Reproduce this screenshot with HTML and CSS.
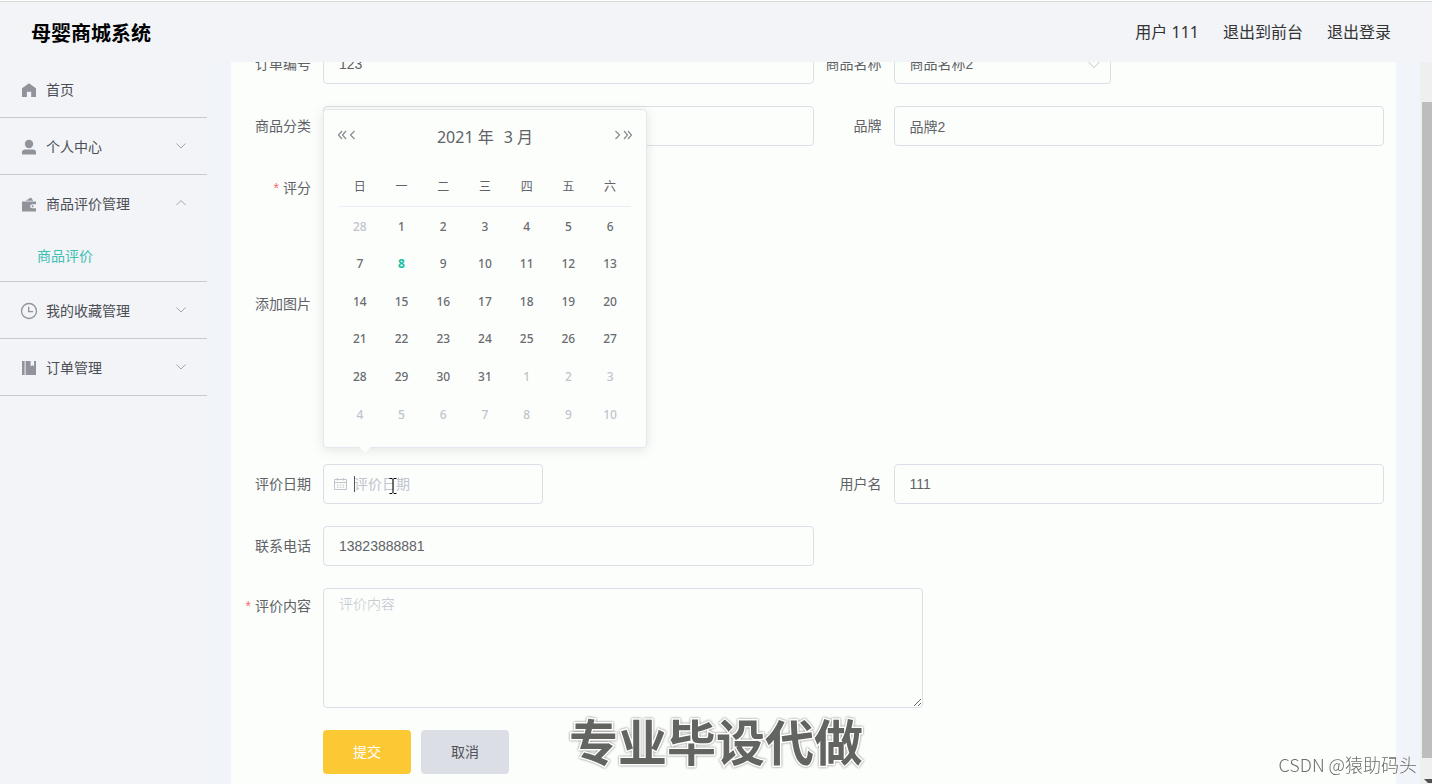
FILE: index.html
```html
<!DOCTYPE html>
<html lang="zh-CN">
<head>
<meta charset="utf-8">
<title>母婴商城系统</title>
<link rel="stylesheet" href="styles.css">
</head>
<body>
<div class="app">
  <header class="header">
    <h1 class="brand">母婴商城系统</h1>
    <nav class="user-nav">
      <span>用户 111</span>
      <a href="#">退出到前台</a>
      <a href="#">退出登录</a>
    </nav>
  </header>
  <div class="body">
    <nav class="sidebar">
      <div class="group">
        <a class="item first" href="#">
          <svg class="icon" viewBox="0 0 18 18"><path d="M9 2.2 L15.6 7 Q16 7.4 16 8 V16 H11.2 V10.7 H6.9 V16 H2 V8 Q2 7.4 2.4 7Z"/></svg>
          <span>首页</span>
        </a>
      </div>
      <div class="group">
        <a class="item" href="#">
          <svg class="icon" viewBox="0 0 18 18"><circle cx="9" cy="6" r="4.2"/><path d="M2 16.5 V14.6 Q2 11.4 5.2 11.4 H12.8 Q16 11.4 16 14.6 V16.5Z"/></svg>
          <span>个人中心</span>
          <svg class="arrow" viewBox="0 0 12 12"><path d="M1.5 2.5 L6 7 L10.5 2.5"/></svg>
        </a>
      </div>
      <div class="group">
        <a class="item" href="#">
          <svg class="icon" viewBox="0 0 18 18"><path d="M2 6.6 H16 V9.3 H12.4 Q10.1 9.3 10.1 11.3 Q10.1 13.3 12.4 13.3 H16 V16.4 H2Z"/><path d="M5.5 5.8 L11 2.6 L13.2 5.8Z"/><circle cx="12.6" cy="11.3" r="1"/></svg>
          <span>商品评价管理</span>
          <svg class="arrow" viewBox="0 0 12 12"><path d="M1.5 7 L6 2.5 L10.5 7"/></svg>
        </a>
        <a class="subitem" href="#">商品评价</a>
      </div>
      <div class="group">
        <a class="item" href="#">
          <svg class="icon line" viewBox="0 0 18 18"><circle cx="9" cy="9" r="7.5"/><path d="M8.7 4.8 V9.6 H13"/></svg>
          <span>我的收藏管理</span>
          <svg class="arrow" viewBox="0 0 12 12"><path d="M1.5 2.5 L6 7 L10.5 2.5"/></svg>
        </a>
      </div>
      <div class="group">
        <a class="item" href="#">
          <svg class="icon" viewBox="0 0 18 18"><path d="M2 2 H4.6 V16 H2Z M5.6 2 H10.6 V7.4 L12.3 6 L14 7.4 V2 H16 V16 H5.6Z"/></svg>
          <span>订单管理</span>
          <svg class="arrow" viewBox="0 0 12 12"><path d="M1.5 2.5 L6 7 L10.5 2.5"/></svg>
        </a>
      </div>
    </nav>
    <main class="main">
      <form class="form">
        <div class="row">
          <div class="field"><label for="order">订单编号</label><input class="control" id="order" value="123"></div>
          <div class="field"><label for="goods">商品名称</label>
            <div class="select-box">
              <select class="control" id="goods"><option>商品名称2</option></select>
              <svg class="select-arrow" viewBox="0 0 14 14"><path d="M1.5 4 L7 9.5 L12.5 4"/></svg>
            </div>
          </div>
        </div>
        <div class="row">
          <div class="field"><label for="category">商品分类</label><input class="control" id="category"></div>
          <div class="field"><label for="make">品牌</label><input class="control" id="make" value="品牌2"></div>
        </div>
        <div class="row rating"><div class="field"><span class="label required">评分</span></div></div>
        <div class="row upload"><div class="field"><span class="label">添加图片</span></div></div>
        <div class="row">
          <div class="field"><label for="date">评价日期</label>
            <div class="date-box">
              <input class="control date-input" id="date" placeholder="评价日期">
              <svg class="calendar-icon" viewBox="0 0 14 14"><path d="M1.5 2.5 H13.5 V12.5 H1.5Z M1.5 5.5 H13.5 M4.5 1 V3.5 M10.5 1 V3.5 M4 8 H5.5 M6.8 8 H8.3 M9.6 8 H11.1 M4 10.2 H5.5 M6.8 10.2 H8.3 M9.6 10.2 H11.1"/></svg>
              <span class="caret"></span>
              <svg class="ibeam" viewBox="0 0 8 16"><path d="M0.5 0.5 H3 L4 1.5 L5 0.5 H7.5 M4 1.5 V14.5 M0.5 15.5 H3 L4 14.5 L5 15.5 H7.5"/></svg>
              <div class="picker">
                <div class="picker-head">
                  <button type="button" aria-label="上一年"><svg viewBox="0 0 10 10"><path d="M5 1 L1.5 5 L5 9 M9 1 L5.5 5 L9 9"/></svg></button>
                  <button type="button" aria-label="上个月"><svg viewBox="0 0 10 10"><path d="M7.5 1 L3.5 5 L7.5 9"/></svg></button>
                  <div class="picker-title"><span>2021 年</span><span>3 月</span></div>
                  <button type="button" aria-label="下个月"><svg viewBox="0 0 10 10"><path d="M2.5 1 L6.5 5 L2.5 9"/></svg></button>
                  <button type="button" aria-label="下一年"><svg viewBox="0 0 10 10"><path d="M1 1 L4.5 5 L1 9 M5 1 L8.5 5 L5 9"/></svg></button>
                </div>
                <table class="days">
                  <thead><tr><th>日</th><th>一</th><th>二</th><th>三</th><th>四</th><th>五</th><th>六</th></tr></thead>
                  <tbody>
                    <tr><td class="out">28</td><td>1</td><td>2</td><td>3</td><td>4</td><td>5</td><td>6</td></tr>
                    <tr><td>7</td><td class="today">8</td><td>9</td><td>10</td><td>11</td><td>12</td><td>13</td></tr>
                    <tr><td>14</td><td>15</td><td>16</td><td>17</td><td>18</td><td>19</td><td>20</td></tr>
                    <tr><td>21</td><td>22</td><td>23</td><td>24</td><td>25</td><td>26</td><td>27</td></tr>
                    <tr><td>28</td><td>29</td><td>30</td><td>31</td><td class="out">1</td><td class="out">2</td><td class="out">3</td></tr>
                    <tr><td class="out">4</td><td class="out">5</td><td class="out">6</td><td class="out">7</td><td class="out">8</td><td class="out">9</td><td class="out">10</td></tr>
                  </tbody>
                </table>
              </div>
            </div>
          </div>
          <div class="field"><label for="user">用户名</label><input class="control" id="user" value="111"></div>
        </div>
        <div class="row">
          <div class="field"><label for="phone">联系电话</label><input class="control" id="phone" value="13823888881"></div>
          <div class="field"></div>
        </div>
        <div class="row">
          <div class="field"><label class="required" for="content">评价内容</label><textarea class="control" id="content" placeholder="评价内容"></textarea></div>
        </div>
        <div class="actions">
          <button class="btn submit" type="button">提交</button>
          <button class="btn cancel" type="button">取消</button>
        </div>
      </form>
    </main>
    <div class="scrollbar"><div class="thumb"></div><div class="scroll-down"></div></div>
  </div>
</div>
<div class="caption">专业毕设代做</div>
<div class="credit">CSDN @猿助码头</div>
</body>
</html>
```
FILE: styles.css
```css
* { box-sizing: border-box; }

body {
  margin: 0;
  font: 14px/20px "Noto Sans", "Noto Sans CJK SC", sans-serif;
  color: #606266;
  background: #f1f5f9;
}

a { color: inherit; text-decoration: none; }

.app {
  display: flex;
  flex-direction: column;
  height: 100vh;
  overflow: hidden;
  border-top: 1px solid #fcfefc;
}

.header {
  flex: none;
  display: flex;
  align-items: center;
  justify-content: space-between;
  height: 61px;
  padding: 0 41px 0 31px;
  background: #f2f4f8;
  border-top: 1px solid #d6dad8;
}

.brand {
  margin: 0;
  padding-top: 3px;
  font-size: 20px;
  line-height: 28px;
  color: #000;
}

.user-nav {
  display: flex;
  gap: 24px;
  font-size: 16px;
  line-height: 24px;
  color: #333;
}

.body { flex: 1; display: flex; min-height: 0; }

.sidebar {
  flex: none;
  width: 207px;
  background: #f2f4f8;
  color: #4c4e54;
}

.group { border-bottom: 1px solid #c8c9c9; }

.item {
  display: flex;
  align-items: center;
  gap: 8px;
  height: 56px;
  padding: 1px 20px 0;
}

.item.first { height: 55px; }

.icon { width: 18px; height: 18px; fill: #909399; }
.icon.line { fill: none; stroke: #909399; stroke-width: 1.3; }

.arrow {
  width: 12px;
  height: 12px;
  margin-left: auto;
  fill: none;
  stroke: #a4a6aa;
}

.subitem {
  display: block;
  padding-left: 37px;
  line-height: 50px;
  color: #40c0b0;
}

.main {
  flex: 1;
  min-width: 0;
  padding: 0 24px;
  overflow: hidden;
}

.form {
  display: flex;
  flex-direction: column;
  gap: 22px;
  min-height: 100%;
  margin-top: -18px;
  padding: 0 12px 22px;
  background: #fcfefc;
}

.row { display: flex; }
.rating { min-height: 94px; }
.upload { min-height: 158px; }

.field { flex: 1; display: flex; min-width: 0; }

label, .label {
  flex: none;
  width: 80px;
  padding-right: 12px;
  line-height: 40px;
  text-align: right;
  white-space: nowrap;
}

.field:has(textarea) label { line-height: 36px; }

.required::before {
  content: "*";
  margin-right: 4px;
  font-family: "Liberation Sans", sans-serif;
  color: #f56c6c;
}

.control {
  flex: 1;
  min-width: 0;
  height: 40px;
  padding: 0 15px;
  font: 14px/20px "Liberation Sans", "Noto Sans CJK SC", sans-serif;
  color: #606266;
  background: #fcfefc;
  border: 1px solid #dcdfe6;
  border-radius: 4px;
  outline: none;
}

.control::placeholder { color: #c0c4cc; opacity: 1; }

textarea.control {
  flex: none;
  width: 600px;
  max-width: 100%;
  height: 120px;
  padding: 5px 15px;
  resize: both;
}

textarea.control::placeholder { font-weight: 300; }

.select-box { position: relative; display: flex; width: 217px; }
.select-box .control { appearance: none; }

.select-arrow {
  position: absolute;
  right: 10px;
  top: 14px;
  width: 14px;
  height: 14px;
  fill: none;
  stroke: #c0c4cc;
  pointer-events: none;
}

.date-box { position: relative; display: flex; width: 220px; }
.date-box .date-input { padding-left: 30px; }

.calendar-icon {
  position: absolute;
  left: 10px;
  top: 13px;
  width: 14px;
  height: 14px;
  fill: none;
  stroke: #c0c4cc;
}

.caret {
  position: absolute;
  left: 31px;
  top: 12px;
  width: 1px;
  height: 16px;
  background: #505256;
}

.ibeam {
  position: absolute;
  left: 66px;
  top: 14px;
  width: 8px;
  height: 16px;
  fill: none;
  stroke: #000;
}

.picker {
  position: absolute;
  left: 0;
  bottom: calc(100% + 16px);
  width: 324px;
  padding: 12px 13px 15px;
  background: #fcfefc;
  border: 1px solid #e4e7ed;
  border-radius: 4px;
  box-shadow: 0 2px 12px rgba(0, 0, 0, 0.1);
}

.picker::after {
  content: "";
  position: absolute;
  left: 35px;
  top: 100%;
  border: 6px solid transparent;
  border-top-color: #fcfefc;
  border-bottom-width: 0;
}

.picker-head {
  display: flex;
  align-items: flex-start;
  height: 46px;
}

.picker-head button {
  display: flex;
  width: 10px;
  padding: 8px 0;
  background: none;
  border: 0;
}

.picker-head svg {
  flex: none;
  width: 10px;
  height: 10px;
  fill: none;
  stroke: #888a90;
  stroke-width: 1.2;
}

.picker-title {
  flex: 1;
  display: flex;
  justify-content: center;
  gap: 10px;
  font-size: 16px;
  line-height: 30px;
}

.days {
  width: calc(100% - 4px);
  height: 264px;
  margin: 0 2px;
  table-layout: fixed;
  border-collapse: collapse;
  font-size: 12px;
  line-height: 16px;
  text-align: center;
}

.days th {
  height: 38px;
  padding: 0;
  font-weight: 400;
  border-bottom: 1px solid #ebeef5;
}

.days td {
  height: 37px;
  padding: 3px 0 0;
  font-weight: 500;
  color: #6a6c70;
}

.days .out { color: #c0c4cc; }
.days .today { color: #20c0a0; font-weight: 700; }

.actions { display: flex; gap: 10px; padding-left: 80px; }

.btn {
  width: 88px;
  height: 44px;
  padding: 0 0 2px;
  font: 14px/20px "Noto Sans CJK SC", sans-serif;
  border: 0;
  border-radius: 4px;
}

.submit { color: #fff; background: #fcc834; }
.cancel { color: #505256; background: #dcdee6; }

.scrollbar {
  flex: none;
  display: flex;
  flex-direction: column;
  width: 12px;
  padding: 40px 0 0 2px;
  background: #eef0ee;
}

.thumb { flex: 1; background: #bcbebc; }

.scroll-down {
  height: 26px;
  padding: 21px 0 0 2px;
}

.scroll-down::before {
  content: "";
  display: block;
  width: 8px;
  border: 4px solid transparent;
  border-top-color: #505250;
  border-bottom-width: 0;
}

.caption {
  position: fixed;
  left: 50%;
  bottom: 16px;
  transform: translateX(-50%);
  font: 700 49px/56px "Noto Sans CJK SC", sans-serif;
  white-space: nowrap;
  color: #626460;
  -webkit-text-stroke: 3px #fff;
  paint-order: stroke fill;
  filter: drop-shadow(0 0 1px #777);
}

.credit {
  position: fixed;
  right: 15px;
  bottom: 8px;
  font: 300 18px/24px "Liberation Sans", "Noto Sans CJK SC", sans-serif;
  font-family: "Noto Sans CJK SC", sans-serif;
  color: #6c6e6c;
}
```
